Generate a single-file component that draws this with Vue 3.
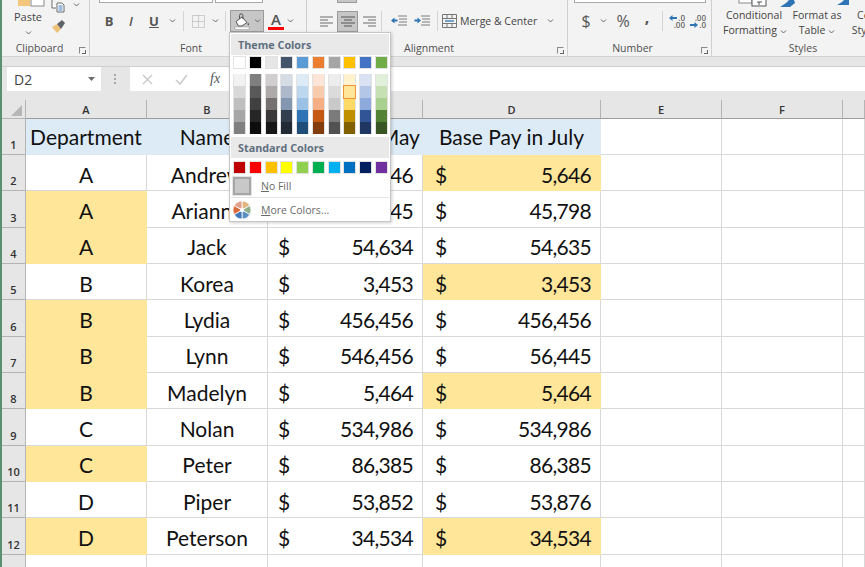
<script setup>
const themeTop = ['#ffffff', '#000000', '#e7e6e6', '#44546a', '#5b9bd5', '#ed7d31', '#a5a5a5', '#ffc000', '#4472c4', '#70ad47']
const shades = [
  ['#f2f2f2', '#7f7f7f', '#d0cece', '#d6dce4', '#ddebf7', '#fce4d6', '#ededed', '#fff2cc', '#d9e1f2', '#e2efda'],
  ['#d9d9d9', '#595959', '#aeaaaa', '#adb9ca', '#bdd7ee', '#f8cbad', '#dbdbdb', '#ffe699', '#b4c6e7', '#c6e0b4'],
  ['#bfbfbf', '#404040', '#767171', '#8497b0', '#9bc2e6', '#f4b084', '#c9c9c9', '#ffd966', '#8ea9db', '#a9d08e'],
  ['#a6a6a6', '#262626', '#3a3838', '#333f4f', '#2f75b5', '#c65911', '#7b7b7b', '#bf8f00', '#305496', '#548235'],
  ['#808080', '#0d0d0d', '#181717', '#222b35', '#1f4e78', '#833c0c', '#525252', '#806000', '#203764', '#375623']
]
const standard = ['#c00000', '#ff0000', '#ffc000', '#ffff00', '#92d050', '#00b050', '#00b0f0', '#0070c0', '#002060', '#7030a0']

const columns = ['A', 'B', 'C', 'D', 'E', 'F', '']

// dept, name, may, july, fill dept?, fill july?
const rows = [
  { dept: 'A', name: 'Andrew', may: '5,646', july: '5,646', fillA: false, fillD: true },
  { dept: 'A', name: 'Arianna', may: '45,745', july: '45,798', fillA: true, fillD: false },
  { dept: 'A', name: 'Jack', may: '54,634', july: '54,635', fillA: true, fillD: false },
  { dept: 'B', name: 'Korea', may: '3,453', july: '3,453', fillA: false, fillD: true },
  { dept: 'B', name: 'Lydia', may: '456,456', july: '456,456', fillA: true, fillD: false },
  { dept: 'B', name: 'Lynn', may: '546,456', july: '56,445', fillA: true, fillD: false },
  { dept: 'B', name: 'Madelyn', may: '5,464', july: '5,464', fillA: true, fillD: true },
  { dept: 'C', name: 'Nolan', may: '534,986', july: '534,986', fillA: false, fillD: false },
  { dept: 'C', name: 'Peter', may: '86,385', july: '86,385', fillA: true, fillD: false },
  { dept: 'D', name: 'Piper', may: '53,852', july: '53,876', fillA: false, fillD: false },
  { dept: 'D', name: 'Peterson', may: '34,534', july: '34,534', fillA: true, fillD: true }
]
</script>

<template>
  <div class="app">
    <div class="ribbon">
      <section class="group clipboard">
        <div class="tools clip-tools">
          <div class="paste">
            <svg class="paste-top" width="28" height="7" viewBox="0 0 28 7">
              <rect x="0" y="-2" width="12" height="8" fill="#f2c77c" />
              <rect x="13" y="-2" width="13" height="8" fill="#fff" stroke="#8a8a8a" />
            </svg>
            <span class="paste-label">Paste</span>
            <svg class="chev" width="7" height="4" viewBox="0 0 7 4"><path d="M1 .5l2.5 2.5L6 .5" /></svg>
          </div>
          <div class="clip-side">
            <div class="copy-row">
              <svg width="14" height="13" viewBox="0 0 14 13">
                <path d="M1 0v8h4M6 3h5l2 2v7H6z" fill="#fff" stroke="#6b6b6b" />
                <path d="M7.5 6h4M7.5 8h4M7.5 10h4" stroke="#3f7fc1" />
              </svg>
              <svg class="chev" width="7" height="4" viewBox="0 0 7 4"><path d="M1 .5l2.5 2.5L6 .5" /></svg>
            </div>
            <svg class="painter" width="16" height="15" viewBox="0 0 16 15">
              <path d="M1 8l5-3 4 5-4 4z" fill="#efc27a" />
              <path d="M6 5l5-4 3 3-4 6z" fill="#5f6368" />
            </svg>
          </div>
        </div>
        <div class="group-label">Clipboard<span class="launcher"></span></div>
      </section>

      <section class="group font-group">
        <div class="top-boxes">
          <span class="box name-stub"></span>
          <span class="box size-stub"></span>
        </div>
        <div class="tools">
          <span class="tool bold w22">B</span>
          <span class="tool italic w22">I</span>
          <span class="tool under w24">U</span>
          <span class="tool w12"><svg class="chev" width="7" height="4" viewBox="0 0 7 4"><path d="M1 .5l2.5 2.5L6 .5" /></svg></span>
          <span class="sep sep-a"></span>
          <span class="tool w14">
            <svg width="13" height="13" viewBox="0 0 13 13"><path d="M.5.5h12v12H.5zM6.5.5v12M.5 6.5h12" fill="none" stroke="#a8a8a8" stroke-dasharray="1 1" /></svg>
          </span>
          <span class="tool w20"><svg class="chev" width="7" height="4" viewBox="0 0 7 4"><path d="M1 .5l2.5 2.5L6 .5" /></svg></span>
          <span class="sep sep-b"></span>
          <span class="fill-btn">
            <svg width="17" height="17" viewBox="0 0 17 17">
              <path d="M2 8.500L8 4l5 5.500-5 3.500H4.500z" fill="#fff" stroke="#555" />
              <path d="M5.500 6V2.500a1.700 1.700 0 0 1 3.400 0V6" fill="none" stroke="#555" />
              <path d="M14 9.500c.8 1 1.200 1.800 1 2.400-.3.600-1.200.5-1.400-.1-.1-.5.100-1.300.4-2.300z" fill="#555" />
              <rect x="1" y="14" width="14" height="2.500" fill="#fff" stroke="#8f8f8f" stroke-width=".5" />
            </svg>
            <svg class="chev" width="7" height="4" viewBox="0 0 7 4"><path d="M1 .5l2.5 2.5L6 .5" /></svg>
          </span>
          <span class="font-color"><span class="a-letter">A</span><i></i></span>
          <span class="tool w12"><svg class="chev" width="7" height="4" viewBox="0 0 7 4"><path d="M1 .5l2.5 2.5L6 .5" /></svg></span>
        </div>
        <div class="group-label">Font</div>
      </section>

      <section class="group align-group">
        <div class="top-boxes"><span class="active-stub"></span></div>
        <div class="tools">
          <span class="tool w20">
            <svg width="14" height="11" viewBox="0 0 14 11"><path d="M0 1h13M0 4h8M0 7h13M0 10h8" stroke="#6d6d6d" /></svg>
          </span>
          <span class="tool active w21">
            <svg width="14" height="11" viewBox="0 0 14 11"><path d="M0 1h14M3 4h8M0 7h14M3 10h8" stroke="#555" /></svg>
          </span>
          <span class="tool w22">
            <svg width="14" height="11" viewBox="0 0 14 11"><path d="M1 1h13M6 4h8M1 7h13M6 10h8" stroke="#6d6d6d" /></svg>
          </span>
          <span class="sep sep-c"></span>
          <span class="tool w24">
            <svg width="16" height="12" viewBox="0 0 16 12">
              <path d="M7 1h9M8 4h8M8 7h8M7 10h9" stroke="#7d7d7d" />
              <path d="M0 5.500l3.500-3v2h3v2h-3v2z" fill="#2f75b5" />
            </svg>
          </span>
          <span class="tool w22">
            <svg width="16" height="12" viewBox="0 0 16 12">
              <path d="M7 1h9M8 4h8M8 7h8M7 10h9" stroke="#7d7d7d" />
              <path d="M7 5.500l-3.500-3v2h-3v2h3v2z" fill="#2f75b5" />
            </svg>
          </span>
          <span class="sep sep-d"></span>
          <svg width="15" height="14" viewBox="0 0 15 14">
            <path d="M.5.5h14v13H.5zM.5 4.500h14M.5 9.500h14M5 .5v4M10 .5v4M5 9.500v4M10 9.500v4" fill="none" stroke="#777" />
            <path d="M3 7h9" stroke="#2f75b5" stroke-width="1.300" />
          </svg>
          <span class="merge-text">Merge &amp; Center</span>
          <svg class="chev merge-chev" width="7" height="4" viewBox="0 0 7 4"><path d="M1 .5l2.5 2.5L6 .5" /></svg>
        </div>
        <div class="group-label">Alignment<span class="launcher"></span></div>
      </section>

      <section class="group number-group">
        <div class="top-boxes"><span class="box num-box"></span></div>
        <div class="tools">
          <span class="tool num-sym w26">$</span>
          <span class="tool w8"><svg class="chev" width="7" height="4" viewBox="0 0 7 4"><path d="M1 .5l2.5 2.5L6 .5" /></svg></span>
          <span class="tool num-sym w32">%</span>
          <span class="tool num-sym comma w10">,</span>
          <span class="sep sep-e"></span>
          <span class="dec">
            <span class="dec-line"><svg width="8" height="6" viewBox="0 0 8 6"><path d="M0 3l3.500-3v2H8v2H3.500v2z" fill="#2f75b5" /></svg>.0</span>
            <span class="dec-line">.00</span>
          </span>
          <span class="dec dec2">
            <span class="dec-line">.00</span>
            <span class="dec-line"><svg width="8" height="6" viewBox="0 0 8 6"><path d="M8 3L4.500 0v2H0v2h4.500v2z" fill="#2f75b5" /></svg>.0</span>
          </span>
        </div>
        <div class="group-label">Number<span class="launcher"></span></div>
      </section>

      <section class="group styles-group">
        <div class="style-icons">
          <svg width="30" height="7" viewBox="0 0 30 7">
            <rect x="1" y="-3" width="13" height="6" fill="#fff" stroke="#8a8a8a" />
            <rect x="14" y="-3" width="14" height="9" fill="#fff" stroke="#555" />
            <path d="M19 2h5M21 2v3" stroke="#555" />
          </svg>
          <svg width="16" height="7" viewBox="0 0 16 7"><path d="M0 7l6-4 3-3h5l1 3-5 4z" fill="#2f75b5" /></svg>
          <svg width="12" height="5" viewBox="0 0 12 5"><path d="M0 5l5-3 2-2h5v5z" fill="#2f75b5" /></svg>
        </div>
        <div class="style-row">
          <span class="style-btn cond">Conditional<br />Formatting <svg class="chev" width="7" height="4" viewBox="0 0 7 4"><path d="M1 .5l2.5 2.5L6 .5" /></svg></span>
          <span class="style-btn fmt">Format as<br />Table <svg class="chev" width="7" height="4" viewBox="0 0 7 4"><path d="M1 .5l2.5 2.5L6 .5" /></svg></span>
          <span class="style-btn cell-btn">Cell<br />Styles</span>
        </div>
        <div class="group-label styles-label">Styles</div>
      </section>
    </div>

    <div class="band"></div>

    <div class="formula-bar">
      <div class="name-box">D2<svg width="7" height="4" viewBox="0 0 7 4"><path d="M0 0h7L3.500 4z" fill="#6b6b6b" /></svg></div>
      <div class="dots"><i></i><i></i><i></i></div>
      <div class="formula-input">
        <svg width="11" height="11" viewBox="0 0 11 11"><path d="M1 1l9 9M10 1l-9 9" stroke="#c8c8c8" stroke-width="1.300" /></svg>
        <svg width="13" height="11" viewBox="0 0 13 11"><path d="M1 6l4 4 7-9" fill="none" stroke="#c8c8c8" stroke-width="1.500" /></svg>
        <span class="fx">fx</span>
      </div>
    </div>

    <div class="sheet">
      <div class="head corner"><i></i></div>
      <div v-for="c in columns" :key="c" class="head col-head">{{ c }}</div>

      <div class="head row-head">1</div>
      <div class="cell title">Department</div>
      <div class="cell title">Name</div>
      <div class="cell title">Base Pay in May</div>
      <div class="cell title">Base Pay in July</div>
      <div class="cell"></div>
      <div class="cell"></div>
      <div class="cell"></div>

      <template v-for="(r, i) in rows" :key="r.name">
        <div class="head row-head">{{ i + 2 }}</div>
        <div class="cell center" :class="{ marked: r.fillA }">{{ r.dept }}</div>
        <div class="cell center">{{ r.name }}</div>
        <div class="cell money"><span>$</span><span class="amount">{{ r.may }}</span></div>
        <div class="cell money july" :class="{ marked: r.fillD }"><span>$</span><span class="amount">{{ r.july }}</span></div>
        <div class="cell"></div>
        <div class="cell"></div>
        <div class="cell"></div>
      </template>

      <div class="head row-head"></div>
      <div class="cell" v-for="n in 7" :key="n"></div>
    </div>

    <div class="palette">
      <div class="pal-title">Theme Colors</div>
      <div class="swatches top-row">
        <span v-for="c in themeTop" :key="c" class="swatch" :style="{ background: c }"></span>
      </div>
      <div class="swatches shade-grid">
        <template v-for="(row, ri) in shades" :key="ri">
          <span v-for="(c, ci) in row" :key="ci" class="shade" :class="{ picked: ri === 1 && ci === 7 }" :style="{ background: c }"></span>
        </template>
      </div>
      <div class="pal-title std">Standard Colors</div>
      <div class="swatches std-row">
        <span v-for="c in standard" :key="c" class="swatch" :style="{ background: c }"></span>
      </div>
      <div class="pal-item no-fill">
        <span class="nofill-box"></span>
        <span><u>N</u>o Fill</span>
      </div>
      <div class="pal-item more">
        <svg width="18" height="18" viewBox="0 0 18 18" stroke="#fff" stroke-width=".8">
          <path d="M9 9V0a9 9 0 0 1 7.800 4.500z" fill="#e3b57e" />
          <path d="M9 9l7.800-4.500a9 9 0 0 1 0 9z" fill="#8fae8a" />
          <path d="M9 9l7.800 4.500A9 9 0 0 1 9 18z" fill="#5a8fc4" />
          <path d="M9 9v9a9 9 0 0 1-7.800-4.500z" fill="#3f78b8" />
          <path d="M9 9L1.200 13.500a9 9 0 0 1 0-9z" fill="#d9693a" />
          <path d="M9 9L1.200 4.500A9 9 0 0 1 9 0z" fill="#e0a08a" />
          <circle cx="9" cy="9" r="1.800" fill="#fff" />
        </svg>
        <span><u>M</u>ore Colors...</span>
      </div>
    </div>
  </div>
</template>

<style scoped>
.app {
  position: relative;
  width: 865px;
  height: 567px;
  box-sizing: border-box;
  border-left: 2px solid #5b8f72;
  overflow: hidden;
  background: #e6e6e6;
  font-family: "Open Sans", "Noto Sans", sans-serif;
  color: #444;
}

/* ribbon */
.ribbon {
  display: flex;
  height: 57px;
  background: #f3f3f3;
  border-bottom: 1px solid #d2d2d2;
  box-sizing: border-box;
}
.group {
  position: relative;
  display: flex;
  flex-direction: column;
  flex: none;
  height: 53px;
  border-right: 1px solid #cfcfcf;
  box-sizing: border-box;
}
.clipboard { width: 88px; }
.font-group { width: 217px; }
.align-group { width: 261px; }
.number-group { width: 144px; }
.styles-group { flex: 1; border-right: 0; overflow: hidden; }

.group-label {
  position: absolute;
  left: 0;
  right: 0;
  top: 41px;
  height: 15px;
  line-height: 15px;
  text-align: center;
  font-size: 10.5px;
  color: #505050;
}
.clipboard .group-label { padding-right: 12px; }
.font-group .group-label { padding-right: 14px; }
.align-group .group-label { padding-right: 16px; }
.number-group .group-label { padding-right: 14px; }
.launcher {
  position: absolute;
  right: 3px;
  bottom: 2px;
  width: 7px;
  height: 7px;
  border: 1px solid #8a8a8a;
  border-right-color: transparent;
  border-bottom-color: transparent;
  box-sizing: border-box;
}
.launcher::after {
  content: "";
  position: absolute;
  right: -1px;
  bottom: -1px;
  width: 3px;
  height: 3px;
  border-right: 1px solid #666;
  border-bottom: 1px solid #666;
}
.group { height: 56px; }

.tools {
  display: flex;
  align-items: center;
  height: 22px;
  margin-top: 10px;
}
.tool {
  display: flex;
  align-items: center;
  justify-content: center;
  height: 21px;
  flex: none;
  box-sizing: border-box;
}
.w8 { width: 8px; }
.w10 { width: 10px; }
.w12 { width: 12px; }
.w14 { width: 14px; }
.w20 { width: 20px; }
.w21 { width: 21px; }
.w22 { width: 22px; }
.w24 { width: 24px; }
.w26 { width: 26px; }
.w32 { width: 32px; }
.chev {
  fill: none;
  stroke: #666;
  stroke-width: 1;
}
.sep {
  flex: none;
  width: 1px;
  height: 20px;
  background: #d4d4d4;
}
.sep-a { margin: 0 7px 0 5px; }
.sep-b { margin: 0 4px 0 0; }
.sep-c { margin: 0 5px 0 1px; }
.sep-d { margin: 0 4px 0 4px; }
.sep-e { margin: 0 6px 0 10px; }
.top-boxes {
  display: flex;
  gap: 2px;
  height: 3px;
  margin-bottom: -3px;
}
.box {
  display: block;
  height: 3px;
  background: #fff;
  border: 1px solid #a9a9a9;
  border-top: 0;
  box-sizing: border-box;
}
.name-stub { width: 114px; }
.size-stub { width: 48px; }
.font-group .top-boxes { padding-left: 9px; }
.font-group .tools { padding-left: 8px; }
.bold { font-weight: 700; font-size: 13px; color: #555; }
.italic { font-style: italic; font-size: 13px; font-weight: 600; color: #555; }
.under { text-decoration: underline; font-size: 13px; font-weight: 700; color: #555; }

.fill-btn {
  display: flex;
  align-items: center;
  gap: 3px;
  width: 34px;
  height: 22px;
  padding-left: 3px;
  flex: none;
  box-sizing: border-box;
  background: #c6c6c6;
  border: 1px solid #9b9b9b;
}
.font-color {
  display: flex;
  flex-direction: column;
  align-items: center;
  width: 16px;
  margin-left: 4px;
  flex: none;
}
.a-letter {
  font-size: 15px;
  line-height: 15px;
  font-weight: 600;
  color: #555;
}
.font-color i {
  display: block;
  width: 16px;
  height: 3px;
  background: #f00;
}

/* clipboard */
.clip-tools {
  align-items: flex-start;
  height: 40px;
  margin-top: 0;
}
.paste {
  display: flex;
  flex-direction: column;
  align-items: center;
  width: 44px;
  padding-left: 8px;
  box-sizing: border-box;
}
.paste-top { margin-left: 7px; }
.paste-label {
  margin-top: 3px;
  font-size: 11px;
  line-height: 14px;
  color: #444;
}
.paste .chev { margin-top: 7px; }
.clip-side {
  display: flex;
  flex-direction: column;
  padding-left: 5px;
}
.copy-row {
  display: flex;
  align-items: flex-start;
  gap: 8px;
}
.copy-row .chev { margin-top: 3px; }
.painter { margin-top: 6px; }

/* alignment */
.active-stub {
  display: block;
  width: 20px;
  height: 3px;
  margin-left: 30px;
  background: #c6c6c6;
  border: 1px solid #9b9b9b;
  border-top: 0;
  box-sizing: border-box;
}
.align-group .tools { padding-left: 10px; }
.active {
  background: #c6c6c6;
  border: 1px solid #9b9b9b;
}
.merge-text {
  margin-left: 3px;
  font-size: 10.5px;
  white-space: nowrap;
  color: #444;
}
.merge-chev { margin-left: 10px; }

/* number */
.num-box {
  width: 132px;
  margin-left: 6px;
}
.number-group .tools { padding-left: 5px; }
.num-sym {
  font-size: 16px;
  font-weight: 400;
  color: #555;
}
.comma { font-weight: 700; padding-bottom: 8px; margin-left: 3px; }
.dec {
  display: flex;
  flex-direction: column;
  width: 16px;
  flex: none;
  font-size: 8px;
  line-height: 7px;
  font-weight: 600;
  color: #666;
}
.dec2 { margin-left: 5px; }
.dec-line {
  display: flex;
  align-items: center;
  gap: 1px;
  justify-content: flex-end;
}

/* styles */
.style-icons {
  display: flex;
  height: 7px;
  gap: 12px;
  padding-left: 26px;
  align-items: flex-start;
}
.style-icons svg:nth-child(3) { margin-left: 29px; }
.style-row {
  display: flex;
  margin-top: 1px;
  font-size: 10.5px;
  line-height: 15px;
  text-align: center;
  white-space: nowrap;
  color: #444;
}
.style-btn { flex: none; }
.cond { width: 62px; margin-left: 11px; }
.fmt { width: 58px; margin-left: 3px; }
.cell-btn { width: 40px; }
.styles-label { right: auto; width: 182px; }

/* formula bar */
.band {
  height: 10px;
  background: #e6e6e6;
  border-bottom: 1px solid #cfcfcf;
  box-sizing: border-box;
}
.formula-bar {
  display: flex;
  align-items: stretch;
  height: 24px;
  background: #e6e6e6;
  margin-bottom: 9px;
}
.name-box {
  display: flex;
  align-items: center;
  justify-content: space-between;
  width: 94px;
  margin-left: 5px;
  padding: 0 6px 0 7px;
  box-sizing: border-box;
  background: #fff;
  font-size: 14px;
  color: #444;
}
.dots {
  display: flex;
  flex-direction: column;
  justify-content: center;
  gap: 2px;
  width: 29px;
  padding-left: 13px;
  box-sizing: border-box;
}
.dots i {
  width: 2px;
  height: 2px;
  background: #a8a8a8;
}
.formula-input {
  flex: 1;
  display: flex;
  align-items: center;
  gap: 22px;
  padding-left: 12px;
  background: #fff;
}
.fx {
  font-family: "Liberation Serif", serif;
  font-style: italic;
  font-size: 14px;
  color: #555;
}

/* sheet */
.sheet {
  display: grid;
  grid-template-columns: 24px 121px 121px 155px 178px 121px 121px 22px;
  grid-template-rows: 19px 36px repeat(11, 36.33px) 30px;
  background: #fff;
  font-family: Lato, "Liberation Sans", sans-serif;
  color: #111;
}
.head {
  display: flex;
  justify-content: center;
  box-sizing: border-box;
  background: #e6e6e6;
  border-right: 1px solid #b4b4b4;
  border-bottom: 1px solid #b4b4b4;
  font-family: "Open Sans", sans-serif;
  font-size: 11px;
  font-weight: 600;
  color: #333;
}
.corner {
  position: relative;
}
.corner i {
  position: absolute;
  right: 3px;
  bottom: 2px;
  width: 0;
  height: 0;
  border-left: 11px solid transparent;
  border-bottom: 11px solid #b6b6b6;
}
.col-head {
  align-items: center;
  border-bottom: 1px solid #9d9d9d;
}
.row-head {
  align-items: flex-end;
  line-height: 15px;
  padding-bottom: 2px;
}
.cell {
  display: flex;
  align-items: center;
  box-sizing: border-box;
  border-right: 1px solid #d8d8d8;
  border-bottom: 1px solid #d8d8d8;
  padding: 3px 9px 0 10px;
  font-size: 21px;
  white-space: nowrap;
  min-width: 0;
}
.title {
  justify-content: center;
  background: #ddebf7;
  border-color: #ddebf7;
  padding: 0;
}
.center {
  justify-content: center;
  padding: 3px 0 0;
}
.money {
  justify-content: space-between;
}
.july { padding-left: 12px; }
.amount { letter-spacing: -0.7px; }
.marked {
  background: #ffe699;
  border-color: #ffe699;
}

/* colour menu */
.palette {
  position: absolute;
  left: 227px;
  top: 32px;
  width: 162px;
  height: 190px;
  box-sizing: border-box;
  padding: 1px;
  background: #fff;
  border: 1px solid #c6c6c6;
  box-shadow: 1px 1px 3px rgba(0, 0, 0, 0.2);
}
.pal-title {
  height: 21px;
  line-height: 21px;
  padding-left: 7px;
  background: #e9e9e9;
  font-size: 10.8px;
  font-weight: 700;
  color: #5f6f7f;
}
.pal-title.std {
  margin-top: 3px;
}
.swatches {
  display: grid;
  grid-template-columns: repeat(10, 11px);
  column-gap: 4.75px;
  padding-left: 3px;
}
.top-row { margin-top: 2px; }
.std-row { margin-top: 4px; }
.shade-grid {
  margin-top: 6px;
  grid-auto-rows: 12px;
}
.swatch {
  height: 11px;
  box-shadow: 0 0 0 1px #e2e2e2;
}
.shade {
  position: relative;
  box-shadow: 1px 0 0 #e2e2e2, -1px 0 0 #e2e2e2;
}
.picked {
  box-shadow: 0 0 0 1px #f29536;
  z-index: 1;
}
.pal-item {
  display: flex;
  align-items: center;
  font-size: 10.5px;
  color: #6a6a6a;
}
.no-fill {
  height: 22px;
  margin-top: 2px;
  gap: 10px;
  padding-left: 2px;
  border-bottom: 1px solid #e4e4e4;
}
.nofill-box {
  width: 18px;
  height: 18px;
  box-sizing: border-box;
  background: #c8c8c8;
  border: 2px solid #a6a6a6;
  outline: 1px solid #e4e4e4;
}
.more {
  height: 24px;
  gap: 10px;
  padding-left: 2px;
}
</style>

<style>
html, body {
  margin: 0;
  background: #fff;
  overflow: hidden;
}
</style>
